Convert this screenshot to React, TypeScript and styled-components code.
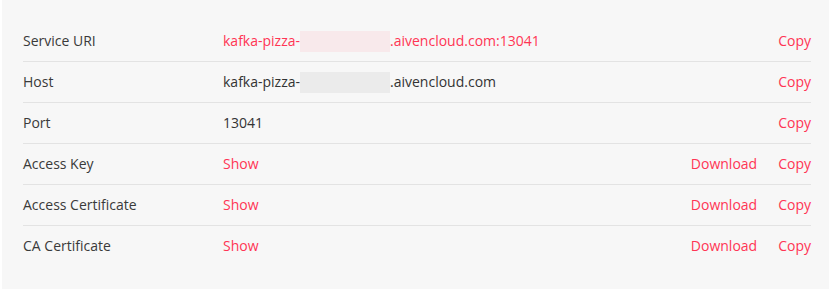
import React from "react";
import styled, { createGlobalStyle } from "styled-components";

const Global = createGlobalStyle`
  html, body { margin: 0; padding: 0; background: #ffffff; }
  body { font-family: "Open Sans", "Noto Sans", sans-serif; }
`;

const Panel = styled.div`
  margin-left: 2px;
  width: 827px;
  height: 289px;
  box-sizing: border-box;
  background: #f7f7f7;
  padding: 21px 18px 0 21px;
`;

const Table = styled.div`
  display: flex;
  flex-direction: column;
`;

const Row = styled.div<{ $last?: boolean }>`
  display: grid;
  grid-template-columns: 200px 1fr auto;
  align-items: center;
  height: 41px;
  box-sizing: border-box;
  border-bottom: 1px solid ${(p) => (p.$last ? "transparent" : "#e3e3e3")};
  font-size: 14px;
  line-height: 18px;
  color: #333333;
`;

const Label = styled.div`
  color: #3a3a3a;
`;

const Value = styled.div<{ $link?: boolean }>`
  color: ${(p) => (p.$link ? "#ff3554" : "#333333")};
  display: flex;
  align-items: center;
  white-space: nowrap;
`;

const Redacted = styled.span<{ $tint: "pink" | "gray" }>`
  display: inline-block;
  width: 90px;
  height: 21px;
  background: ${(p) => (p.$tint === "pink" ? "#f8e9eb" : "#ebebeb")};
`;

const Actions = styled.div`
  display: flex;
  gap: 21px;
  justify-content: flex-end;
`;

const Action = styled.span`
  color: #ff3554;
  cursor: pointer;
`;

type Item = {
  label: string;
  value?: React.ReactNode;
  link?: boolean;
  download?: boolean;
};

const rows: Item[] = [
  {
    label: "Service URI",
    link: true,
    value: (
      <>
        kafka-pizza-<Redacted $tint="pink" />.aivencloud.com:13041
      </>
    ),
  },
  {
    label: "Host",
    value: (
      <>
        kafka-pizza-<Redacted $tint="gray" />.aivencloud.com
      </>
    ),
  },
  { label: "Port", value: "13041" },
  { label: "Access Key", value: "Show", link: true, download: true },
  { label: "Access Certificate", value: "Show", link: true, download: true },
  { label: "CA Certificate", value: "Show", link: true, download: true },
];

export default function App() {
  return (
    <>
      <Global />
      <Panel>
        <Table>
          {rows.map((r, i) => (
            <Row key={r.label} $last={i === rows.length - 1}>
              <Label>{r.label}</Label>
              <Value $link={r.link}>{r.value}</Value>
              <Actions>
                {r.download && <Action>Download</Action>}
                <Action>Copy</Action>
              </Actions>
            </Row>
          ))}
        </Table>
      </Panel>
    </>
  );
}
